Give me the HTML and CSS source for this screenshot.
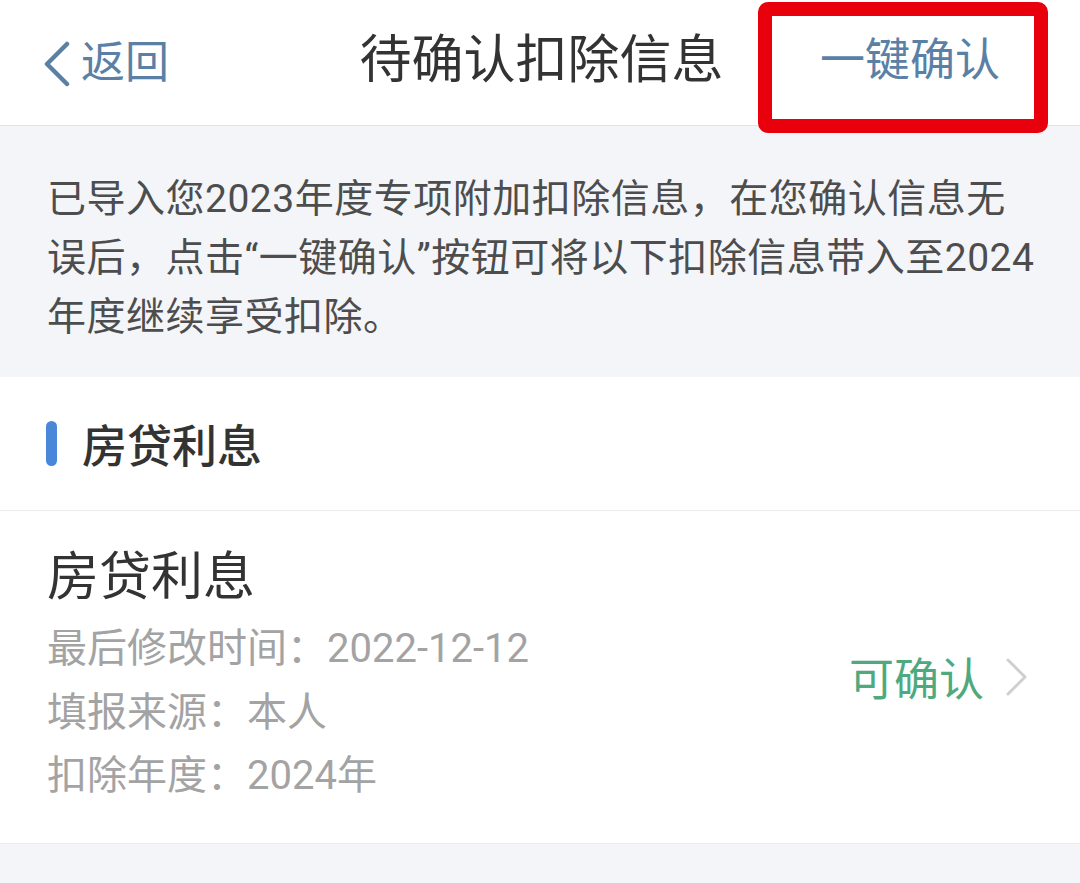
FILE: index.html
```html
<!DOCTYPE html>
<html lang="zh-CN">

<head>
    <meta charset="UTF-8">
    <meta name="viewport" content="width=device-width, initial-scale=1.0">
    <title>待确认扣除信息</title>
    <link rel="stylesheet" href="styles.css">
</head>

<body>

    <!-- Top bar -->
    <div class="nav-bar">
        <a class="nav-back" href="javascript:void(0);">
            <svg class="back-icon" width="28" height="46" viewBox="0 0 28 46">
                <polyline points="24,3 4,23 24,43" fill="none" stroke="#5b80a6" stroke-width="4.5" stroke-linecap="round" stroke-linejoin="round" />
            </svg>
            <span>返回</span>
        </a>
        <div class="nav-title">待确认扣除信息</div>
        <a class="nav-action" href="javascript:void(0);">一键确认</a>
        <div class="highlight-box"></div>
    </div>

    <!-- Notice -->
    <div class="notice">
        <p>已导入您2023年度专项附加扣除信息，在您确认信息无误后，点击“一键确认”按钮可将以下扣除信息带入至2024年度继续享受扣除。</p>
    </div>

    <!-- Group -->
    <div class="group">
        <div class="group-header">
            <span class="group-mark"></span>
            <span class="group-title">房贷利息</span>
        </div>

        <div class="item">
            <div class="item-info">
                <div class="item-title">房贷利息</div>
                <div class="item-line">最后修改时间：2022-12-12</div>
                <div class="item-line">填报来源：本人</div>
                <div class="item-line">扣除年度：2024年</div>
            </div>
            <div class="item-status">
                <span>可确认</span>
                <svg class="arrow-icon" width="26" height="40" viewBox="0 0 26 40">
                    <polyline points="4,3 21,20 4,37" fill="none" stroke="#cfcfcf" stroke-width="3" stroke-linecap="round" stroke-linejoin="round" />
                </svg>
            </div>
        </div>
    </div>

    <div class="page-bottom"></div>

</body>

</html>
```

FILE: styles.css
```css
/* Global Styles */
body {
    margin: 0;
    padding: 0;
    width: 1080px;
    background-color: #ffffff;
    font-family: Roboto, "Noto Sans CJK SC", sans-serif;
    color: #333333;
}

/* Top bar */
.nav-bar {
    position: relative;
    height: 125px;
    display: flex;
    align-items: center;
    justify-content: space-between;
    padding: 0 80px 0 43px;
    border-bottom: 1px solid #e3e4e8;
    background-color: #ffffff;
}

.nav-back {
    display: flex;
    align-items: center;
    gap: 10px;
    width: 220px;
    text-decoration: none;
    color: #5b80a6;
    font-size: 44px;
    line-height: 1;
}

.back-icon {
    display: block;
    margin-top: 2px;
}

.nav-title {
    font-size: 52px;
    color: #333333;
    line-height: 1;
    margin-top: -4px;
}

.nav-action {
    width: 180px;
    text-align: right;
    text-decoration: none;
    color: #5b80a6;
    font-size: 45px;
    line-height: 1;
    margin-top: -4px;
}

/* red frame drawn over the action */
.highlight-box {
    position: absolute;
    left: 758px;
    top: 2px;
    width: 262px;
    height: 103px;
    border: 14px solid #e8000d;
    border-radius: 10px;
}

/* Notice */
.notice {
    background-color: #f3f5f9;
    padding: 44px 40px 30px 47px;
}

.notice p {
    margin: 0;
    font-size: 39px;
    line-height: 59px;
    color: #4d4d4d;
    letter-spacing: 0.5px;
}

/* Group */
.group-header {
    height: 133px;
    display: flex;
    align-items: center;
    padding-left: 46px;
    border-bottom: 1px solid #ececec;
}

.group-mark {
    width: 11px;
    height: 45px;
    border-radius: 6px;
    background-color: #4a86d9;
    margin-right: 25px;
}

.group-title {
    font-size: 45px;
    font-weight: 500;
    color: #333333;
}

.item {
    display: flex;
    align-items: center;
    justify-content: space-between;
    padding: 35px 50px 35px 47px;
    border-bottom: 1px solid #ececec;
}

.item-title {
    font-size: 52px;
    line-height: 64px;
    color: #333333;
    margin-bottom: 7px;
}

.item-line {
    font-size: 40px;
    line-height: 63.5px;
    color: #a3a3a3;
}

.item-status {
    display: flex;
    align-items: center;
    gap: 20px;
    font-size: 45px;
    color: #4fa97f;
}

.arrow-icon {
    display: block;
}

.page-bottom {
    height: 40px;
    background-color: #f4f5f9;
}
```
